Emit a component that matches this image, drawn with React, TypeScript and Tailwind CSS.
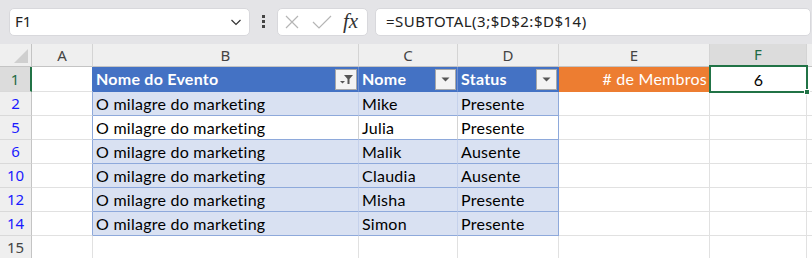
import { ReactNode } from "react";

const cellFont = "font-['Lato','Noto_Sans',sans-serif]";

const rows = [
  { n: "2", name: "Mike", status: "Presente", band: true },
  { n: "5", name: "Julia", status: "Presente", band: false },
  { n: "6", name: "Malik", status: "Ausente", band: true },
  { n: "10", name: "Claudia", status: "Ausente", band: true },
  { n: "12", name: "Misha", status: "Presente", band: true },
  { n: "14", name: "Simon", status: "Presente", band: true },
];

const FilterArrow = () => (
  <div className="w-[21px] h-[21px] border border-[#a8a8a8] bg-[#f3f3f3] flex items-center justify-center">
    <svg width="9" height="5" viewBox="0 0 9 5">
      <path d="M0.5 0.5 L8.5 0.5 L4.5 4.5 Z" fill="#555" />
    </svg>
  </div>
);

const FilterFunnel = () => (
  <div className="w-[22px] h-[21px] border border-[#a8a8a8] bg-[#f3f3f3] flex items-center justify-center">
    <svg width="15" height="13" viewBox="0 0 15 13">
      <path d="M5 2 L14 2 L10.5 6 L10.5 11 L8.5 11 L8.5 6 Z" fill="#555" />
      <path d="M1 8 L6 8 L3.5 10.5 Z" fill="#555" />
    </svg>
  </div>
);

function Cell({
  w,
  className = "",
  children,
}: {
  w: string;
  className?: string;
  children?: ReactNode;
}) {
  return (
    <div className={`${w} shrink-0 h-full border-r border-b flex items-center ${className}`}>
      {children}
    </div>
  );
}

function RowHead({ label, blue, active }: { label: string; blue?: boolean; active?: boolean }) {
  return (
    <div
      className={`w-[32px] shrink-0 h-full border-b border-[#d9d9d9] flex items-center justify-center text-[15px] tracking-normal font-['Noto_Sans',sans-serif] ${
        active
          ? "bg-[#dcdcdc] text-[#1f6b45] border-r-2 border-r-[#217346]"
          : "bg-[#efefef] border-r border-r-[#c4c4c4]"
      } ${blue ? "text-[#1a1aff]" : active ? "" : "text-[#444]"}`}
    >
      {label}
    </div>
  );
}

export default function App() {
  return (
    <div className="w-[812px] h-[258px] overflow-hidden bg-white font-['Noto_Sans',sans-serif]">
      {/* formula bar */}
      <div className="h-[44px] bg-[#e4e4e7] flex items-center pl-[9px] pb-[1px]">
        <div className="w-[241px] h-[28px] bg-white rounded-[5px] border border-[#d8d8dc] flex items-center justify-between pl-[5px] pr-[6px]">
          <span className="text-[15px] text-[#222]">F1</span>
          <svg width="14" height="14" viewBox="0 0 14 14">
            <path d="M2.5 5 L7 9.5 L11.5 5" fill="none" stroke="#333" strokeWidth="1.2" />
          </svg>
        </div>
        <div className="w-[27px] flex flex-col items-center gap-[2px]">
          <div className="w-[3px] h-[3px] bg-[#444]" />
          <div className="w-[3px] h-[3px] bg-[#444]" />
          <div className="w-[3px] h-[3px] bg-[#444]" />
        </div>
        <div className="w-[91px] h-[28px] bg-white rounded-[5px] border border-[#d8d8dc] flex items-center pl-[6px] gap-[12px]">
          <svg width="16" height="16" viewBox="0 0 16 16">
            <path d="M2 2 L14 14 M14 2 L2 14" stroke="#b5b5b5" strokeWidth="1.2" />
          </svg>
          <svg width="20" height="16" viewBox="0 0 20 16">
            <path d="M1 8 L7 14 L19 2" fill="none" stroke="#b5b5b5" strokeWidth="1.2" />
          </svg>
          <span className="font-['Liberation_Serif',serif] italic text-[21px] leading-none text-[#333] -ml-[1px]">
            fx
          </span>
        </div>
        <div className="flex-1 ml-[7px] mr-[1px] h-[28px] bg-white rounded-[5px] border border-[#d8d8dc] flex items-center pl-[10px]">
          <span className="text-[15px] tracking-[0.5px] text-[#222]">=SUBTOTAL(3;$D$2:$D$14)</span>
        </div>
      </div>

      {/* column headers */}
      <div className="h-[23px] flex bg-[#efefef] text-[15px] text-[#444]">
        <div className="w-[32px] shrink-0 h-full border-r border-b border-[#c4c4c4] flex items-end justify-end p-[3px]">
          <svg width="14" height="14" viewBox="0 0 14 14">
            <path d="M14 0 L14 14 L0 14 Z" fill="#cfcfcf" />
          </svg>
        </div>
        <Cell w="w-[61px]" className="justify-center border-[#d4d4d4] border-b-[#c4c4c4]">A</Cell>
        <Cell w="w-[266px]" className="justify-center border-[#d4d4d4] border-b-[#c4c4c4]">B</Cell>
        <Cell w="w-[99px]" className="justify-center border-[#d4d4d4] border-b-[#c4c4c4]">C</Cell>
        <Cell w="w-[101px]" className="justify-center border-[#d4d4d4] border-b-[#c4c4c4]">D</Cell>
        <Cell w="w-[151px]" className="justify-center border-[#d4d4d4] border-b-[#c4c4c4]">E</Cell>
        <Cell w="w-[97px]" className="justify-center bg-[#dcdcdc] text-[#1f6b45] border-[#d4d4d4] border-b-2 border-b-[#217346]">
          F
        </Cell>
        <Cell w="w-[40px]" className="border-[#d4d4d4] border-b-[#c4c4c4]" />
      </div>

      <div className={`${cellFont} text-[16px] tracking-[0.25px] text-black`}>
        {/* header row */}
        <div className="h-[25px] flex">
          <RowHead label="1" active />
          <Cell w="w-[61px]" className="border-[#e1e1e1] border-r-[#4472c4]" />
          <Cell w="w-[266px]" className="bg-[#4472c4] border-[#4472c4] border-r-[#6f8fd0] text-white font-bold pl-[3px] pr-[1px] justify-between">
            <span>Nome do Evento</span>
            <FilterFunnel />
          </Cell>
          <Cell w="w-[99px]" className="bg-[#4472c4] border-[#4472c4] border-r-[#6f8fd0] text-white font-bold pl-[3px] pr-[1px] justify-between">
            <span>Nome</span>
            <FilterArrow />
          </Cell>
          <Cell w="w-[101px]" className="bg-[#4472c4] border-[#4472c4] text-white font-bold pl-[3px] pr-[1px] justify-between">
            <span>Status</span>
            <FilterArrow />
          </Cell>
          <Cell w="w-[151px]" className="bg-[#ed7d31] border-[#ed7d31] text-white justify-end pr-[2px]">
            # de Membros
          </Cell>
          <div className="w-[97px] shrink-0 h-full relative flex items-center justify-center">
            <span>6</span>
            <div className="absolute -left-[1px] -top-[2px] -right-[1px] -bottom-[1px] border-2 border-[#217346]" />
            <div className="absolute -right-[3px] -bottom-[3px] w-[6px] h-[6px] bg-[#217346] border border-white" />
          </div>
          <Cell w="w-[40px]" className="border-[#e1e1e1]" />
        </div>

        {rows.map((r) => {
          const bg = r.band ? "bg-[#d9e1f2]" : "bg-white";
          return (
            <div key={r.n} className="h-[24px] flex">
              <RowHead label={r.n} blue />
              <Cell w="w-[61px]" className="border-[#e1e1e1] border-r-[#8ea9db]" />
              <Cell w="w-[266px]" className={`${bg} border-b-[#8ea9db] ${r.band ? "border-r-[#c5d1eb]" : "border-r-[#d4d4d4]"} pl-[3px]`}>
                O milagre do marketing
              </Cell>
              <Cell w="w-[99px]" className={`${bg} border-b-[#8ea9db] ${r.band ? "border-r-[#c5d1eb]" : "border-r-[#d4d4d4]"} pl-[3px]`}>
                {r.name}
              </Cell>
              <Cell w="w-[101px]" className={`${bg} border-b-[#8ea9db] border-r-[#8ea9db] pl-[3px]`}>
                {r.status}
              </Cell>
              <Cell w="w-[151px]" className="border-[#e1e1e1]" />
              <Cell w="w-[97px]" className="border-[#e1e1e1]" />
              <Cell w="w-[40px]" className="border-[#e1e1e1]" />
            </div>
          );
        })}

        <div className="h-[24px] flex">
          <RowHead label="15" />
          <Cell w="w-[61px]" className="border-[#e1e1e1]" />
          <Cell w="w-[266px]" className="border-[#e1e1e1]" />
          <Cell w="w-[99px]" className="border-[#e1e1e1]" />
          <Cell w="w-[101px]" className="border-[#e1e1e1]" />
          <Cell w="w-[151px]" className="border-[#e1e1e1]" />
          <Cell w="w-[97px]" className="border-[#e1e1e1]" />
          <Cell w="w-[40px]" className="border-[#e1e1e1]" />
        </div>
      </div>
    </div>
  );
}
